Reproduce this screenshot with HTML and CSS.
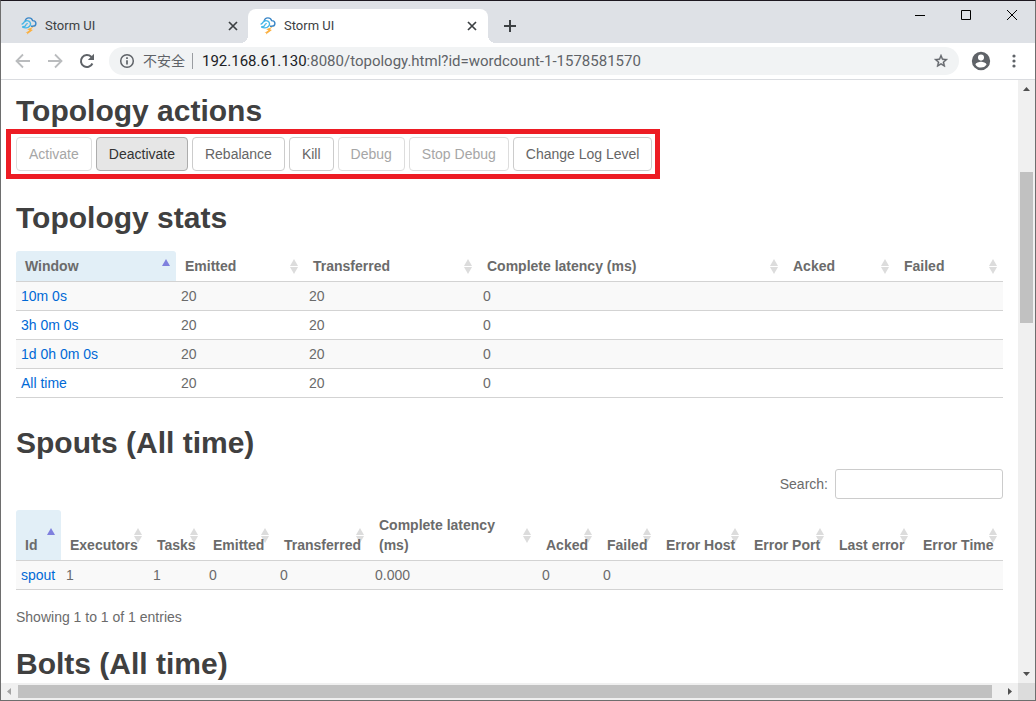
FILE: index.html
```html
<!DOCTYPE html>
<html lang="en">
<head>
<meta charset="utf-8">
<meta name="viewport" content="width=device-width, initial-scale=1">
<title>Storm UI</title>
<link rel="stylesheet" href="styles.css">
</head>
<body>
<svg class="defs" aria-hidden="true">
  <symbol id="storm" viewBox="0 0 16 18">
    <path d="M4 4.600C4.400 2.300 5.900.9 7.900.9c1.900 0 3.200 1 3.700 2.700 2.100.1 3.300 1.300 3.300 2.900 0 1.700-1.300 2.800-3.200 2.800H10" fill="none" stroke="#3b87c8" stroke-width="1.400"/>
    <path d="M.6 7.200c1.500-.1 1.900-1 2.500-2 1-1.600 3.200-2 4.800-1 1.900 1.200 2.200 3.700.7 5.100-1.900 1.900-5.100 2-7.300.5" fill="none" stroke="#46b7e6" stroke-width="1.400"/>
    <path d="M1.300 9.700c2.200.1 3.300-.4 3.500-1.600.2-1 1-1.600 2-1.300" fill="none" stroke="#46b7e6" stroke-width="1.200"/>
    <path d="M13 9.500 6.200 12.300l2.300.9L4.500 15.900l1.900-.1-.5 1.600 6-4.400-2-.8z" fill="#fbb040"/>
  </symbol>
  <symbol id="cross" viewBox="0 0 10 10">
    <path d="M1 1l8 8M9 1L1 9" fill="none" stroke="#3c4043" stroke-width="1.700"/>
  </symbol>
</svg>
<div class="browser">
  <header class="tabs">
    <div class="tab">
      <svg class="favicon"><use href="#storm"/></svg>
      <span class="tab-title">Storm UI</span>
      <button class="icon-button" aria-label="Close tab"><svg class="cross"><use href="#cross"/></svg></button>
    </div>
    <div class="tab tab-active">
      <svg class="favicon"><use href="#storm"/></svg>
      <span class="tab-title">Storm UI</span>
      <button class="icon-button" aria-label="Close tab"><svg class="cross"><use href="#cross"/></svg></button>
    </div>
    <button class="icon-button new-tab" aria-label="New tab"><svg width="12" height="12" viewBox="0 0 12 12"><path d="M6 0v12M0 6h12" stroke="#3c4043" stroke-width="2"/></svg></button>
    <div class="window-controls">
      <button class="icon-button" aria-label="Minimize"><svg width="10" height="11" viewBox="0 0 10 11"><path d="M0 5.500h10" stroke="#000"/></svg></button>
      <button class="icon-button" aria-label="Maximize"><svg width="10" height="10" viewBox="0 0 10 10"><path d="M.5.5h9v9h-9z" fill="none" stroke="#000"/></svg></button>
      <button class="icon-button" aria-label="Close"><svg width="10" height="10" viewBox="0 0 10 10"><path d="M0 0l10 10M10 0L0 10" stroke="#000"/></svg></button>
    </div>
  </header>

  <nav class="toolbar">
    <button class="icon-button nav-button" aria-label="Back"><svg width="16" height="16" viewBox="0 0 16 16"><path d="M15 8H2M8 1.500 1.500 8 8 14.500" fill="none" stroke="#babcbe" stroke-width="1.800"/></svg></button>
    <button class="icon-button nav-button" aria-label="Forward"><svg width="16" height="16" viewBox="0 0 16 16"><path d="M1 8h13M8 1.500 14.500 8 8 14.500" fill="none" stroke="#babcbe" stroke-width="1.800"/></svg></button>
    <button class="icon-button nav-button" aria-label="Reload"><svg width="16" height="16" viewBox="0 0 16 16"><path d="M13.400 10.500A6 6 0 1 1 12.200 3.800L13.500 5" fill="none" stroke="#5f6368" stroke-width="2"/><path d="M15 .8v6.200H8.800z" fill="#5f6368"/></svg></button>
    <div class="address">
      <svg width="16" height="16" viewBox="0 0 16 16"><circle cx="8" cy="8" r="6.300" fill="none" stroke="#5f6368" stroke-width="1.500"/><path d="M8 7.200v4.300M8 4.300v1.700" stroke="#5f6368" stroke-width="1.700"/></svg>
      <span class="security" lang="zh">不安全</span>
      <span class="url"><b>192.168.61.130</b>:8080/topology.html?id=wordcount-1-1578581570</span>
      <button class="icon-button" aria-label="Bookmark"><svg width="16" height="16" viewBox="0 0 24 24"><path d="M22 9.240l-7.190-.62L12 2 9.190 8.630 2 9.240l5.460 4.730L5.820 21 12 17.270 18.180 21l-1.630-7.030L22 9.240zM12 15.400l-3.760 2.270 1-4.280-3.320-2.880 4.380-.38L12 6.100l1.710 4.040 4.380.38-3.320 2.880 1 4.280L12 15.400z" fill="#5f6368" stroke="#5f6368" stroke-width=".6"/></svg></button>
    </div>
    <button class="icon-button" aria-label="Profile"><svg width="22" height="22" viewBox="0 0 24 24"><path d="M12 2a10 10 0 1 0 0 20 10 10 0 0 0 0-20zm0 3a3.300 3.300 0 1 1 0 6.600A3.300 3.300 0 0 1 12 5zm0 14.200a7.200 7.200 0 0 1-6-3.220c.03-1.990 4-3.080 6-3.080s5.970 1.090 6 3.080a7.200 7.200 0 0 1-6 3.220z" fill="#5f6368"/></svg></button>
    <button class="icon-button menu-button" aria-label="Menu"><svg width="4" height="14" viewBox="0 0 4 14"><g fill="#5f6368"><circle cx="2" cy="2" r="1.600"/><circle cx="2" cy="7" r="1.600"/><circle cx="2" cy="12" r="1.600"/></g></svg></button>
  </nav>

  <div class="viewport">
    <main class="page">
      <h2>Topology actions</h2>
      <div class="actions">
        <button class="btn" disabled>Activate</button>
        <button class="btn btn-hover">Deactivate</button>
        <button class="btn">Rebalance</button>
        <button class="btn">Kill</button>
        <button class="btn" disabled>Debug</button>
        <button class="btn" disabled>Stop Debug</button>
        <button class="btn">Change Log Level</button>
      </div>

      <h2 class="stats-title">Topology stats</h2>
      <table class="grid">
        <colgroup><col class="w160"><col class="w128"><col class="w174"><col class="w306"><col class="w111"><col class="w108"></colgroup>
        <thead>
          <tr><th class="asc">Window</th><th>Emitted</th><th>Transferred</th><th>Complete latency (ms)</th><th>Acked</th><th>Failed</th></tr>
        </thead>
        <tbody>
          <tr><td><a href="#10m">10m 0s</a></td><td>20</td><td>20</td><td>0</td><td></td><td></td></tr>
          <tr><td><a href="#3h">3h 0m 0s</a></td><td>20</td><td>20</td><td>0</td><td></td><td></td></tr>
          <tr><td><a href="#1d">1d 0h 0m 0s</a></td><td>20</td><td>20</td><td>0</td><td></td><td></td></tr>
          <tr><td><a href="#all">All time</a></td><td>20</td><td>20</td><td>0</td><td></td><td></td></tr>
        </tbody>
      </table>

      <h2 class="spouts-title">Spouts (All time)</h2>
      <div class="filter">
        <label for="search">Search:</label>
        <input id="search" type="search">
      </div>
      <table class="grid">
        <colgroup><col class="w45"><col class="w87"><col class="w56"><col class="w71"><col class="w95"><col class="w167"><col class="w61"><col class="w59"><col class="w88"><col class="w85"><col class="w84"><col class="w89"></colgroup>
        <thead>
          <tr><th class="asc">Id</th><th>Executors</th><th>Tasks</th><th>Emitted</th><th>Transferred</th><th>Complete latency<br>(ms)</th><th>Acked</th><th>Failed</th><th>Error Host</th><th>Error Port</th><th>Last error</th><th>Error Time</th></tr>
        </thead>
        <tbody>
          <tr><td><a href="#spout">spout</a></td><td>1</td><td>1</td><td>0</td><td>0</td><td>0.000</td><td>0</td><td>0</td><td></td><td></td><td></td><td></td></tr>
        </tbody>
      </table>
      <p class="info">Showing 1 to 1 of 1 entries</p>

      <h2>Bolts (All time)</h2>
    </main>
    <div class="scroll scroll-y" aria-hidden="true">
      <svg class="arrow" viewBox="0 0 17 17"><path d="M5 11l3.500-4 3.500 4z" fill="#505050"/></svg>
      <div class="track"><div class="thumb"></div></div>
      <svg class="arrow" viewBox="0 0 17 17"><path d="M5 6l3.500 4L12 6z" fill="#505050"/></svg>
    </div>
    <div class="scroll scroll-x" aria-hidden="true">
      <svg class="arrow" viewBox="0 0 17 17"><path d="M10 5L6 8.500l4 3.500z" fill="#a3a3a3"/></svg>
      <div class="track"><div class="thumb"></div></div>
      <svg class="arrow" viewBox="0 0 17 17"><path d="M7 5l4 3.500L7 12z" fill="#505050"/></svg>
    </div>
    <div class="corner"></div>
  </div>
</div>
</body>
</html>
```
FILE: styles.css
```css
* { box-sizing: border-box; }

body {
  margin: 0;
  color: #6b6b6b;
  background: #fff;
  font: 14px/20px "Liberation Sans", Arial, sans-serif;
}

.defs { display: none; }

.browser {
  display: flex;
  flex-direction: column;
  height: 100vh;
  border: 1px solid #6e6e6e;
  border-top-color: #1d1820;
}

.icon-button {
  display: flex;
  align-items: center;
  justify-content: center;
  padding: 0;
  border: 0;
  background: none;
}

/* Tab strip */
.tabs {
  display: flex;
  flex: none;
  height: 42px;
  padding-top: 8px;
  background: #dee1e6;
}

.tab {
  display: flex;
  align-items: center;
  flex: 0 1 247px;
  gap: 8px;
  padding: 0 10px 0 20px;
}

.tab-active {
  position: relative;
  flex-basis: 240px;
  padding: 0 11px 0 12px;
  border-radius: 8px 8px 0 0;
  background: #fff;
}

.tab-active::before,
.tab-active::after {
  content: "";
  position: absolute;
  bottom: 0;
  width: 8px;
  height: 8px;
}

.tab-active::before {
  right: 100%;
  background: radial-gradient(circle at 0 0, transparent 8px, #fff 8px);
}

.tab-active::after {
  left: 100%;
  background: radial-gradient(circle at 100% 0, transparent 8px, #fff 8px);
}

.favicon { width: 16px; height: 18px; }

.tab-title {
  flex: 1;
  color: #3c4043;
  font: 13px/18px Roboto, sans-serif;
}

.cross { width: 10px; height: 10px; }

.new-tab { width: 44px; }

.window-controls {
  display: flex;
  align-self: flex-start;
  margin: -8px 0 0 auto;
}

.window-controls .icon-button { width: 46px; height: 28px; }

/* Toolbar */
.toolbar {
  display: flex;
  flex: none;
  align-items: center;
  height: 37px;
  padding-left: 6px;
  border-bottom: 1px solid #dadce0;
}

.nav-button { width: 32px; }

.address {
  display: flex;
  flex: 1;
  align-items: center;
  min-width: 0;
  height: 28px;
  margin: 0 11px 0 6px;
  padding: 0 10px;
  border-radius: 14px;
  color: #5f6368;
  background: #f1f3f4;
  font: 15px/20px Roboto, "Noto Sans CJK SC", sans-serif;
}

.security {
  margin-left: 8px;
  padding-right: 7px;
  border-right: 1px solid #9a9da1;
  font-size: 14px;
  line-height: 16px;
}

.url {
  flex: 1;
  overflow: hidden;
  padding-left: 9px;
  white-space: nowrap;
}

.url b { color: #202124; font-weight: 400; }

.menu-button { width: 43px; }

/* Page area with its scrollbars */
.viewport {
  display: grid;
  flex: 1;
  grid-template: minmax(0, 1fr) 17px / minmax(0, 1fr) 17px;
  min-height: 0;
}

.page {
  overflow: hidden;
  padding: 14px 15px 0;
}

.scroll { display: flex; background: #f0f0f0; }
.scroll-y { flex-direction: column; }
.arrow { flex: none; width: 17px; height: 17px; }
.track { display: flex; flex: 1; }
.thumb { background: #c1c1c1; }

.scroll-y .track { flex-direction: column; padding: 0 2px; }
.scroll-y .thumb { height: 151px; margin-top: 75px; }
.scroll-x .track { padding: 2px 0; }
.scroll-x .thumb { flex: 1; margin-right: 9px; }
.corner { background: #dcdcdc; }

/* Page content */
h2 {
  margin: 0 0 10px;
  color: #404040;
  font-size: 30px;
  line-height: 33px;
}

.stats-title { margin: 30px 0 17px; }
.spouts-title { margin-top: 28px; }

.actions {
  position: relative;
  display: flex;
  gap: 4px;
  width: fit-content;
}

.actions::after {
  content: "";
  position: absolute;
  inset: -8px -8px -8px -10px;
  border: 5px solid #ed1c24;
  pointer-events: none;
}

.btn {
  padding: 6px 12px;
  border: 1px solid #ccc;
  border-radius: 4px;
  color: #666;
  background: #fff;
  font: inherit;
  white-space: nowrap;
}

.btn:disabled { border-color: #ddd; color: #a6a6a6; }
.btn-hover { border-color: #adadad; color: #333; background: #e6e6e6; }

a { color: #0069d6; text-decoration: none; }

.grid {
  width: 100%;
  table-layout: fixed;
  border-spacing: 0;
}

.grid th {
  position: relative;
  z-index: 0;
  padding: 5px 0 5px 9px;
  text-align: left;
  vertical-align: bottom;
  white-space: nowrap;
}

.grid td {
  height: 29px;
  padding: 4px 5px;
  border-bottom: 1px solid #d3d3d3;
}

.grid th { border-bottom: 1px solid #d3d3d3; }
.grid tbody tr:nth-child(odd) { background: #f9f9f9; }

.grid th::before,
.grid th::after {
  content: "";
  position: absolute;
  right: 6px;
  z-index: -1;
  border: 4px solid transparent;
}

.grid th::before {
  bottom: 50%;
  border-top: 0;
  border-bottom: 7px solid #dcdcdc;
}

.grid th::after {
  top: calc(50% + 1px);
  border-bottom: 0;
  border-top: 7px solid #dcdcdc;
}

.grid .asc {
  border-radius: 3px 3px 0 0;
  background: #e2eff7;
}

.grid .asc::before { border-bottom-color: #7f80de; }
.grid .asc::after { display: none; }

.w45 { width: 45px; }
.w56 { width: 56px; }
.w59 { width: 59px; }
.w61 { width: 61px; }
.w71 { width: 71px; }
.w84 { width: 84px; }
.w85 { width: 85px; }
.w87 { width: 87px; }
.w88 { width: 88px; }
.w89 { width: 89px; }
.w95 { width: 95px; }
.w108 { width: 108px; }
.w111 { width: 111px; }
.w128 { width: 128px; }
.w160 { width: 160px; }
.w167 { width: 167px; }
.w174 { width: 174px; }
.w306 { width: 306px; }

.filter {
  display: flex;
  align-items: center;
  justify-content: flex-end;
  gap: 7px;
  margin-bottom: 11px;
}

.filter input {
  width: 168px;
  height: 30px;
  padding: 4px;
  border: 1px solid #ccc;
  border-radius: 3px;
  color: inherit;
  background: #fff;
  font: inherit;
}

.info { margin: 17px 0 20px; }
```
